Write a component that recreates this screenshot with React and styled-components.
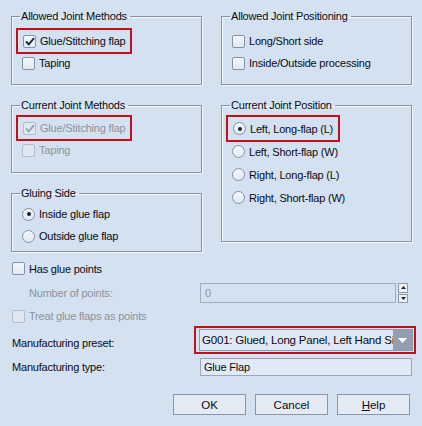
import React from "react";
import styled, { createGlobalStyle, css } from "styled-components";

const GlobalStyle = createGlobalStyle`
  html, body {
    margin: 0;
    background: #d3e1f0;
  }
  body {
    font-family: "Liberation Sans", Arial, sans-serif;
    font-size: 11px;
    letter-spacing: -0.2px;
    color: #0b0b14;
  }
`;

const Dialog = styled.div`
  width: 422px;
  height: 426px;
  box-sizing: border-box;
  padding: 9px 10px 0 11px;
  background: #d3e1f0;
`;

const TopGrid = styled.div`
  display: grid;
  grid-template-columns: 191px 191px;
  column-gap: 19px;
`;

const Column = styled.div`
  display: flex;
  flex-direction: column;
  gap: 13px;
`;

const Group = styled.fieldset`
  margin: 0;
  padding: ${p => p.$pad || 6}px 0 0 10px;
  min-width: 0;
  height: ${p => p.$h}px;
  box-sizing: border-box;
  border: 1px solid #8493a8;
  border-radius: 0;
  box-shadow: 1px 1px 0 #f4f8fc, inset 1px 1px 0 #f4f8fc;
`;

const Legend = styled.legend`
  margin-left: -2px;
  padding: 0 3px 0 1px;
  line-height: 14px;
  font-size: 11px;
  font-weight: 400;
`;

const Option = styled.div`
  display: flex;
  align-items: center;
  gap: 4px;
  height: ${p => p.$h || 22}px;
  width: fit-content;
  color: ${p => (p.$disabled ? "#8c939e" : "inherit")};
  ${p =>
    p.$boxed &&
    css`
      border: 2px solid #c0101c;
      margin: -2px -6px;
      padding: 0 5px;
    `}
`;

const Box = styled.span`
  display: inline-flex;
  align-items: center;
  justify-content: center;
  width: 11px;
  height: 11px;
  border: 1px solid ${p => (p.$disabled ? "#b4bdc9" : "#8591a4")};
  border-radius: 2px;
  background: ${p => (p.$disabled ? "#dfe7f1" : "linear-gradient(#f3f6fa, #e3e9f2)")};
  flex: none;
`;

const Round = styled.span`
  display: inline-flex;
  align-items: center;
  justify-content: center;
  width: 11px;
  height: 11px;
  border: 1px solid #8591a4;
  border-radius: 50%;
  background: linear-gradient(#f3f6fa, #e3e9f2);
  flex: none;
  &::after {
    content: "";
    width: 4px;
    height: 4px;
    border-radius: 50%;
    background: ${p => (p.$on ? "#1a2338" : "transparent")};
  }
`;

const Check = ({ checked, disabled, children, boxed, h }) => (
  <Option $disabled={disabled} $boxed={boxed} $h={h}>
    <Box $disabled={disabled}>
      {checked && (
        <svg width="10" height="9" viewBox="0 0 10 9">
          <path
            d="M1 4.5 L3.8 7.3 L9 1.2"
            fill="none"
            stroke={disabled ? "#9ba3ae" : "#1b2741"}
            strokeWidth="1.9"
          />
        </svg>
      )}
    </Box>
    {children}
  </Option>
);

const Radio = ({ on, children, boxed, h }) => (
  <Option $boxed={boxed} $h={h}>
    <Round $on={on} />
    {children}
  </Option>
);

const Lower = styled.div`
  display: flex;
  flex-direction: column;
  margin-top: 5px;
  padding-left: 1px;
`;

const FieldRow = styled.div`
  display: grid;
  grid-template-columns: ${p => p.$label || 188}px minmax(0, 1fr);
  align-items: center;
  height: ${p => p.$h || 22}px;
  margin-top: ${p => p.$top || 0}px;
  padding-left: ${p => p.$indent || 0}px;
  color: ${p => (p.$disabled ? "#8c939e" : "inherit")};
`;

const Label = styled.span`
  padding-top: ${p => p.$shift || 0}px;
`;

const Spinner = styled.div`
  display: flex;
  gap: 2px;
  width: 208px;
  height: 20px;
`;

const SpinInput = styled.div`
  flex: 1;
  box-sizing: border-box;
  border: 1px solid #a3adba;
  background: #d3e1f0;
  color: #8c939e;
  padding: 3px 4px;
`;

const SpinButtons = styled.div`
  display: flex;
  flex-direction: column;
  width: 10px;
  gap: 1px;
`;

const SpinButton = styled.div`
  flex: 1;
  border: 1px solid #8c97a8;
  background: #eef2f8;
  display: flex;
  align-items: center;
  justify-content: center;
`;

const PresetFrame = styled.div`
  border: 2px solid #c0101c;
  margin: 0 -4px 0 -6px;
  padding: 1px 1px 1px 3px;
`;

const Select = styled.div`
  display: flex;
  height: 22px;
  box-sizing: border-box;
  border: 1px solid #8c9ab0;
  background: #dfe8f4;
`;

const SelectText = styled.div`
  flex: 1;
  overflow: hidden;
  white-space: nowrap;
  padding: 4px 0 0 2px;
  font-size: 11.5px;
`;

const Arrow = styled.div`
  width: 19px;
  background: #939fb0;
  display: flex;
  align-items: center;
  justify-content: center;
`;

const TextBox = styled.div`
  height: 18px;
  box-sizing: border-box;
  border: 1px solid #9aa7ba;
  background: #e0e9f5;
  padding: 2px 3px;
`;

const Buttons = styled.div`
  display: flex;
  justify-content: flex-end;
  gap: 9px;
  margin-top: 18px;
  padding-right: 2px;
`;

const Button = styled.button`
  width: 73px;
  height: 21px;
  border: 1px solid #8995a8;
  background: #e3eaf4;
  font: inherit;
  font-size: 11.5px;
  color: #0b0b14;
  padding: 0;
`;

export default function App() {
  return (
    <Dialog>
      <GlobalStyle />
      <TopGrid>
        <Column>
          <Group $h={76} $pad={7}>
            <Legend>Allowed Joint Methods</Legend>
            <Check checked boxed>Glue/Stitching flap</Check>
            <Check>Taping</Check>
          </Group>
          <Group $h={75} $pad={5}>
            <Legend>Current Joint Methods</Legend>
            <Check checked disabled boxed>Glue/Stitching flap</Check>
            <Check disabled>Taping</Check>
          </Group>
          <Group $h={66} $pad={3}>
            <Legend>Gluing Side</Legend>
            <Radio on>Inside glue flap</Radio>
            <Radio>Outside glue flap</Radio>
          </Group>
        </Column>
        <Column>
          <Group $h={76} $pad={7}>
            <Legend>Allowed Joint Positioning</Legend>
            <Check>Long/Short side</Check>
            <Check>Inside/Outside processing</Check>
          </Group>
          <Group $h={144} $pad={5}>
            <Legend>Current Joint Position</Legend>
            <Radio on boxed h={23}>Left, Long-flap (L)</Radio>
            <Radio h={23}>Left, Short-flap (W)</Radio>
            <Radio h={23}>Right, Long-flap (L)</Radio>
            <Radio h={23}>Right, Short-flap (W)</Radio>
          </Group>
        </Column>
      </TopGrid>

      <Lower>
        <Check h={23}>Has glue points</Check>
        <FieldRow $disabled $indent={17} $label={171} $h={26}>
          <span>Number of points:</span>
          <Spinner>
            <SpinInput>0</SpinInput>
            <SpinButtons>
              <SpinButton>
                <svg width="5" height="3" viewBox="0 0 5 3"><path d="M0 3 L2.5 0 L5 3Z" fill="#222" /></svg>
              </SpinButton>
              <SpinButton>
                <svg width="5" height="3" viewBox="0 0 5 3"><path d="M0 0 L2.5 3 L5 0Z" fill="#222" /></svg>
              </SpinButton>
            </SpinButtons>
          </Spinner>
        </FieldRow>
        <Check disabled h={20}>Treat glue flaps as points</Check>
        <FieldRow $h={28}>
          <Label $shift={6}>Manufacturing preset:</Label>
          <PresetFrame>
            <Select>
              <SelectText>G001: Glued, Long Panel, Left Hand Side</SelectText>
              <Arrow>
                <svg width="9" height="5" viewBox="0 0 9 5"><path d="M0 0 L4.5 5 L9 0Z" fill="#fff" /></svg>
              </Arrow>
            </Select>
          </PresetFrame>
        </FieldRow>
        <FieldRow $h={18} $top={4}>
          <Label>Manufacturing type:</Label>
          <TextBox>Glue Flap</TextBox>
        </FieldRow>
      </Lower>

      <Buttons>
        <Button>OK</Button>
        <Button>Cancel</Button>
        <Button><u>H</u>elp</Button>
      </Buttons>
    </Dialog>
  );
}
